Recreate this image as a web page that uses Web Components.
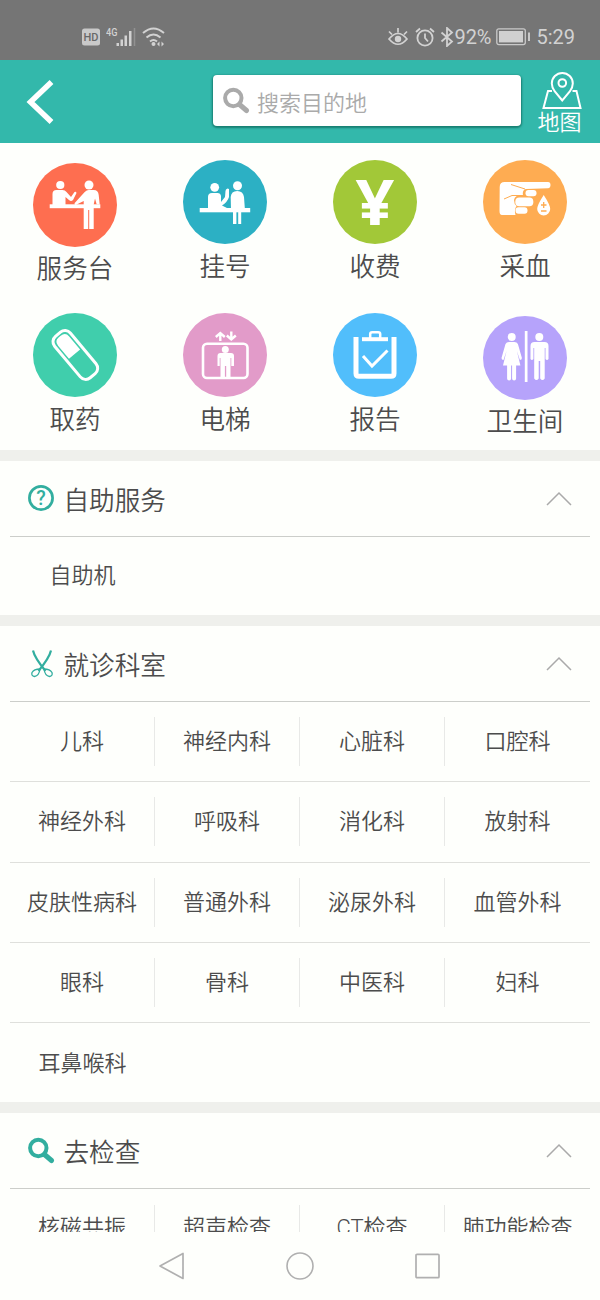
<!DOCTYPE html>
<html lang="zh-CN">
<head>
<meta charset="utf-8">
<meta name="viewport" content="width=device-width">
<title>院内导航</title>
<style>
  html, body { margin: 0; height: 100%; }
  body { background: #fefffc; color: #4c4c4c; font-family: Roboto, "Noto Sans CJK SC", sans-serif; font-weight: 350; overflow: hidden; }
</style>
</head>
<body>
<hospital-app></hospital-app>
<script>
const ICONS = {
  desk: ['84 84', `<g fill="#fff" stroke="none"><circle cx="27.3" cy="22" r="4.1"/><path d="M19.5 42V31q0-4 4-4h6q2.500 0 4 2l4.500 5 3.500-5q1.500-1 2 1l-3.500 7q-2 2-4 0l-3.500-3v8z"/><rect x="16.700" y="41.300" width="50.600" height="3.900"/><circle cx="56" cy="22" r="4.500"/><path d="M50.700 66V38l-8 4q-2-.5-1-2l10-11q2-2 4-2h5q4.500 0 5 5l1 9.500h-3l-1.700-6-1.300 6V66h-4.500V47h-1v19z"/></g>`],
  register: ['84 84', `<g fill="#fff"><circle cx="31.700" cy="27.300" r="4.400"/><path d="M25 48V37q0-4 4-4h5.500q3 0 3.500 3v6l4-5 .5-6q0-2 2-2.500l1.500.5v8q-1.500 5-7 8.500l5 2.500v1H18v-1z"/><rect x="16.700" y="48" width="50.500" height="4.300"/><circle cx="54.500" cy="25.700" r="4.500"/><path d="M48 50l-.3-13q.5-6 6.500-6t6.800 6l.8 11-1 2zM50 52h3.400v12H50zM55.200 52h3v12h-3z"/></g>`],
  fee: ['84 84', `<text transform="translate(42 64.500) scale(1.080 1)" text-anchor="middle" font-family="Open Sans" font-weight="700" font-size="63" fill="#fff">¥</text>`],
  blood: ['84 84', `<path fill="#fff" d="M16.700 27q0-5 5-5H65q2.500 0 2.500 3T65 28.200L43 29q-4 1-3 6-8-.5-9 5 0 4 2.500 6-2.500 3-1 9H19q-2.500 0-2.500-4z"/><g fill="#fff"><rect x="42.500" y="30" width="11" height="6.300" rx="3"/><rect x="32.300" y="37.500" width="18" height="8.800" rx="4"/><rect x="32.500" y="47.300" width="12" height="6.500" rx="3"/><path d="M60.700 35q-6.500 10-6.500 14a6.500 6.500 0 0 0 13 0q0-4-6.500-14z"/></g><path d="M28 24.500l14 4.500M21 39l8-3.500h11" fill="none" stroke="#feac52"/><path d="M58 45h5.500M60.700 42v6M58 51h5.500" stroke="#feac52" stroke-width="1.300"/>`],
  pill: ['84 84', `<g transform="rotate(-40 42 42)"><rect x="32" y="15.200" width="20.500" height="54" rx="7" fill="none" stroke="#fff" stroke-width="3"/><path fill="#fff" d="M35 41V24q0-6 6-6h2.500q6 0 6 6v17z"/></g>`],
  lift: ['84 84', `<rect x="20" y="30.800" width="44.500" height="34.200" rx="4" fill="none" stroke="#fff" stroke-width="2.600"/><g fill="#fff"><circle cx="42.300" cy="36.400" r="3.500"/><path d="M34.500 53V43q0-3 3-3H48q3 0 3 3v10h-2.700v-8h-.8v20h-4.300V53h-1.300v12h-4.400V45h-.8v8z"/></g><path d="M37.300 28v-8M32.800 24l4.500-4 4.500 4M48.300 18.500v8M43.800 22.500l4.500 4 4.500-4" fill="none" stroke="#fff" stroke-width="2.400"/>`],
  report: ['84 84', `<g fill="none" stroke="#fff"><path d="M23 24v36.500q0 2.800 3 2.800h32q3 0 3-2.800V24" stroke-width="5"/><path d="M29 26.200h26" stroke-width="4"/><path d="M37.200 25v-4q0-1.800 2-1.800h6q2 0 2 1.800v4" stroke-width="2.500"/><path d="M30 43l9 10 15.500-15.500" stroke-width="3"/></g>`],
  toilet: ['84 84', `<g fill="#fff"><rect x="41.800" y="15" width="2.700" height="51"/><circle cx="28.700" cy="21" r="4"/><path d="M22.500 28q1-2 3.500-2h5.400q2.500 0 3.500 2l4 14q0 2-2 2l-3-9 3.500 14.500h-4.300v13q0 2-2 2t-2-2v-13h-1v13q0 2-2 2t-2-2v-13H20L23.500 35l-3 9q-2 0-2-2z"/><circle cx="56.300" cy="21" r="4"/><path d="M47.500 43V30q0-4 4-4h10q4 0 4 4v13q-1.500 2-3 0V32h-.8v30.500q-2.200 3-4.500 0V45h-1.500v17.500q-2.200 3-4.500 0V32h-.8v11q-1.500 2-2.900 0z"/></g>`],
  back: ['30 44', `<path d="M26.500 2L5.500 22l21 20" fill="none" stroke="#fff" stroke-width="5.500"/>`],
  search: ['28 28', `<circle cx="11.300" cy="11" r="8.200" fill="none" stroke="currentColor" stroke-width="4"/><path d="M17.500 17.500l7 6" stroke="currentColor" stroke-width="5" stroke-linecap="round"/>`],
  map: ['40 38', `<g fill="none" stroke="#fff" stroke-width="2"><path d="M20.300 29.500l-7.500-9q-3-4-3-8a10.500 10.500 0 0 1 21 0q0 4-3 8zM10 20H6L1.500 37h37L34.500 20h-4"/><circle cx="20.300" cy="12" r="3.800"/></g>`],
  help: ['28 28', `<circle cx="14" cy="13" r="11.600" fill="none" stroke="#32ae9f" stroke-width="2.700"/><text x="14" y="19.800" text-anchor="middle" font-size="19.500" font-weight="500" font-family="Roboto" fill="#32ae9f">?</text>`],
  scissors: ['28 28', `<g fill="none" stroke="#32ae9f"><path d="M6 .5q1.500 7 12.500 20.500M24 .5q-1.500 7-12.500 20.500" stroke-width="2.200"/><path d="M13 19q-1 7-5.500 7.500-3.500-.5-2.500-4 2-3.500 8-3.500zM17 19q1 7 5.500 7.500 3.500-.5 2.500-4-2-3.500-8-3.500z" stroke-width="1.300"/></g>`],
  up: ['26 15', `<path d="M1 14L13 2l12 12" fill="none" stroke="#aaa" stroke-width="1.500"/>`],
  hd: ['18 18', `<rect width="18" height="17" rx="2.500" y=".5" fill="#c9c9c9"/><text x="9" y="13" text-anchor="middle" font-size="11" font-weight="500" font-family="Roboto" fill="#686868">HD</text>`],
  signal: ['30 22', `<text transform="translate(0 9.500) scale(.8 1)" font-size="11.500" font-weight="500" font-family="Roboto" fill="#d2d2d2">4G</text><g fill="#d2d2d2"><rect x="10.500" y="17" width="2.500" height="3"/><rect x="14.500" y="13.500" width="2.500" height="6.500"/><rect x="18.500" y="9.500" width="2.500" height="10.500"/><rect x="23" y="5" width="2.500" height="15"/></g><path d="M28.500 2v18" stroke="#919191" stroke-width="1.500"/>`],
  wifi: ['24 22', `<g fill="none" stroke="#d2d2d2" stroke-width="2"><path d="M1 7q10.500-9 21 0M4.500 11.500q7-6 14 0M8 15.500q3.500-3 7 0"/></g><circle cx="11.500" cy="18" r="2" fill="#d2d2d2"/><path d="M17.500 15.500L15 18l2.500 2.500zM19.500 15.500L22 18l-2.500 2.500z" fill="#d2d2d2"/>`],
  eye: ['20 20', `<g fill="none" stroke="#d2d2d2" stroke-width="1.700"><path d="M1 12q9-11 18 0-9 10.500-18 0zM1 4.500l3 3M19 4.500l-3 3M10 1v4.500"/></g><circle cx="10" cy="12" r="3.200" fill="#d2d2d2"/>`],
  alarm: ['20 20', `<g fill="none" stroke="#d2d2d2" stroke-width="1.800"><circle cx="10" cy="11" r="7.600"/><path d="M10 6.500V11l3 3.500M1 5l4-3.500M19 5l-4-3.500"/></g>`],
  bt: ['14 20', `<path d="M1.500 5.500l10.500 9-5 4.500V1l5 4.500-10.500 9" fill="none" stroke="#d2d2d2" stroke-width="1.800"/>`],
  battery: ['35 18', `<rect x=".8" y=".8" width="28.500" height="15.800" rx="2" fill="none" stroke="#c9c9c9" stroke-width="1.300"/><rect x="3" y="3" width="24" height="11.400" fill="#d0d0d0"/><path d="M33 4.500v8.500" stroke="#c9c9c9" stroke-width="2"/>`],
  navBack: ['28 30', `<path d="M25 2.500v25L2 15z" fill="none" stroke="#b0b0b0" stroke-width="1.700" stroke-linejoin="round"/>`],
  navHome: ['28 28', `<circle cx="14" cy="14" r="13" fill="none" stroke="#b0b0b0" stroke-width="1.600"/>`],
  navRecent: ['28 28', `<rect x="2" y="2.300" width="23" height="23.400" rx="1" fill="none" stroke="#b0b0b0" stroke-width="1.700"/>`]
};

// Shared base: every element renders its own markup and styles into an open root.
class Base extends HTMLElement {
  connectedCallback() {
    if (this.shadowRoot) return;
    const t = document.createElement('template');
    t.innerHTML = this.render();
    this.attachShadow({ mode: 'open' }).append(t.content.cloneNode(true));
  }
}

class UiIcon extends Base {
  render() {
    const [box, body] = ICONS[this.getAttribute('name')];
    const [w, h] = box.split(' ');
    return `<style>:host{display:block;flex:none}svg{display:block}</style>
      <svg width="${w}" height="${h}" viewBox="0 0 ${box}">${body}</svg>`;
  }
}

class StatusBar extends Base {
  render() {
    return `<style>
      :host{display:flex;flex:none;height:60px;box-sizing:border-box;padding:14px 25px 0 82px;background:#757575;color:#d2d2d2;align-items:center;font:20px/24px Roboto,sans-serif}
      .left,.right{display:flex;align-items:center}
      .left{gap:6px}.right{margin-left:auto}
      .alarm{margin:0 5px 0 6px}.battery{margin:0 5px 0 5px}
      .eye{margin-right:1px}.bt{margin-right:1px}
      .pct{letter-spacing:-.1px}
      </style>
      <div class="left"><ui-icon name="hd"></ui-icon><ui-icon name="signal"></ui-icon><ui-icon name="wifi"></ui-icon></div>
      <div class="right"><ui-icon class="eye" name="eye"></ui-icon><ui-icon class="alarm" name="alarm"></ui-icon><ui-icon class="bt" name="bt"></ui-icon><span class="pct">92%</span><ui-icon class="battery" name="battery"></ui-icon><span>5:29</span></div>`;
  }
}

class SearchHeader extends Base {
  render() {
    return `<style>
      :host{display:flex;flex:none;height:83px;box-sizing:border-box;padding:0 19px 0 25px;background:#33b8ab;align-items:center}
      .field{display:flex;align-items:center;box-sizing:border-box;width:308px;height:51px;margin:0 17px 2px auto;padding-left:9px;gap:7px;border-radius:4px;background:#fff;color:#aaa;font-size:22px;line-height:30px;box-shadow:0 1px 2px 1px #187f72}
      .field ui-icon{margin-top:1px}.field span{padding-top:7px}
      .map{display:flex;flex-direction:column;align-items:center;width:43px;color:#fff;font-size:22px;line-height:26px;padding-top:5px}
      .map ui-icon{margin:-1px 0 0 4px}.map span{white-space:nowrap;margin-top:1px}
      </style>
      <ui-icon name="back"></ui-icon>
      <div class="field"><ui-icon name="search"></ui-icon><span>搜索目的地</span></div>
      <div class="map"><ui-icon name="map"></ui-icon><span>地图</span></div>`;
  }
}

class ServiceTile extends Base {
  render() {
    return `<style>
      :host{display:flex;flex-direction:column;align-items:center;padding-top:17px}
      :host([low]){padding-top:20px}
      .disc{width:84px;height:84px;border-radius:50%;background:${this.getAttribute('color')}}
      .label{margin-top:8px;font-size:25.6px;line-height:30px;white-space:nowrap}
      :host([low]) .label{margin-top:7px}
      </style>
      <div class="disc"><ui-icon name="${this.getAttribute('icon')}"></ui-icon></div>
      <div class="label"><slot></slot></div>`;
  }
}

class ServiceGrid extends Base {
  render() {
    return `<style>:host{display:grid;flex:none;grid-template-columns:repeat(4,1fr);grid-template-rows:153px 154px}</style><slot></slot>`;
  }
}

class FoldSection extends Base {
  render() {
    return `<style>
      :host{display:block;flex:none;border-top:11px solid #eff0ec;padding:0 10px}
      header{display:flex;align-items:center;height:75px;padding:0 18px 0 17px;border-bottom:1px solid #ccceca}
      h2{margin:5px 0 0 8.500px;font-size:25.6px;line-height:32px;font-weight:inherit}
      .mark{color:#32ae9f}
      .up{margin-left:auto}
      .body{display:grid;grid-template-columns:repeat(4,1fr)}
      </style>
      <header><ui-icon class="mark" name="${this.getAttribute('icon')}"></ui-icon><h2>${this.getAttribute('heading')}</h2><ui-icon class="up" name="up"></ui-icon></header>
      <div class="body"><slot></slot></div>`;
  }
}

class DeptCell extends Base {
  render() {
    return `<style>
      :host{display:flex;height:80.300px;box-sizing:border-box;align-items:center;border-bottom:1px solid #dfe0dc}
      :host([last]){border-bottom:0}
      span{flex:1;height:49px;line-height:var(--cell-line,48px);text-align:center;font-size:22px;white-space:nowrap;box-sizing:border-box;border-right:1px solid #e8e9e7}
      :host([edge]) span{border-right:0}
      </style><span><slot></slot></span>`;
  }
}

class NavBar extends Base {
  render() {
    return `<style>:host{display:flex;flex:none;height:68px;justify-content:center;align-items:center;gap:100px;background:#fefffc}</style>
      <ui-icon name="navBack"></ui-icon><ui-icon name="navHome"></ui-icon><ui-icon name="navRecent"></ui-icon>`;
  }
}

class HospitalApp extends Base {
  cells(names) {
    const lastRow = Math.floor((names.length - 1) / 4);
    return names.map((n, i) => `<dept-cell${i % 4 === 3 || (names.length - 1 === i) ? ' edge' : ''}${Math.floor(i / 4) === lastRow ? ' last' : ''}>${n}</dept-cell>`).join('');
  }
  render() {
    const tiles = [['desk', '#fe6e50', '服务台', 1], ['register', '#2cb0c4', '挂号'], ['fee', '#a2c838', '收费'], ['blood', '#feac52', '采血'],
      ['pill', '#40ceac', '取药'], ['lift', '#e29bc9', '电梯'], ['report', '#51befb', '报告'], ['toilet', '#b6a3fb', '卫生间', 1]];
    return `<style>
      :host{display:flex;flex-direction:column;height:1300px;width:600px}
      main{flex:1;min-height:0;overflow:hidden;display:flex;flex-direction:column}
      .self{height:154px}.dept{height:476px}
      .self,.exam{--cell-line:46px}.dept{--cell-line:49px}
      </style>
      <status-bar></status-bar><search-header></search-header>
      <main>
        <service-grid>${tiles.map(([i, c, t, low]) => `<service-tile icon="${i}" color="${c}"${low ? ' low' : ''}>${t}</service-tile>`).join('')}</service-grid>
        <fold-section class="self" icon="help" heading="自助服务">${this.cells(['自助机'])}</fold-section>
        <fold-section class="dept" icon="scissors" heading="就诊科室">${this.cells(['儿科', '神经内科', '心脏科', '口腔科', '神经外科', '呼吸科', '消化科', '放射科', '皮肤性病科', '普通外科', '泌尿外科', '血管外科', '眼科', '骨科', '中医科', '妇科', '耳鼻喉科'])}</fold-section>
        <fold-section class="exam" icon="search" heading="去检查">${this.cells(['核磁共振', '超声检查', 'CT检查', '肺功能检查'])}</fold-section>
      </main>
      <nav-bar></nav-bar>`;
  }
}

customElements.define('ui-icon', UiIcon);
customElements.define('status-bar', StatusBar);
customElements.define('search-header', SearchHeader);
customElements.define('service-tile', ServiceTile);
customElements.define('service-grid', ServiceGrid);
customElements.define('fold-section', FoldSection);
customElements.define('dept-cell', DeptCell);
customElements.define('nav-bar', NavBar);
customElements.define('hospital-app', HospitalApp);
</script>
</body>
</html>
